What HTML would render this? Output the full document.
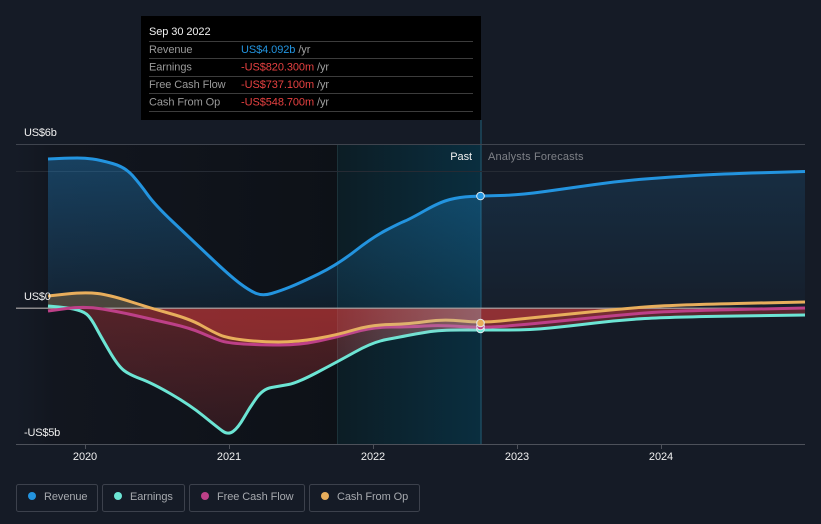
<!DOCTYPE html>
<html><head><meta charset="utf-8"><style>
html,body{margin:0;padding:0;width:821px;height:524px;overflow:hidden;background:#151b26}
svg{position:absolute;left:0;top:0}
text{font-family:"Liberation Sans",Arial,sans-serif;font-size:11px;letter-spacing:-.08px;dominant-baseline:central;transform:translateY(1px)}
.l{fill:#9a9a9a}.w{fill:#f0f0f0}.r{fill:#e64141}.y{fill:#a0a0a0}.g{fill:#a6a9ae}
</style></head><body>
<svg width="821" height="524" viewBox="0 0 821 524" xmlns="http://www.w3.org/2000/svg">
<defs>
<linearGradient id="dark" x1="0" x2="1" y1="0" y2="0"><stop offset="0" stop-color="#151b26"/><stop offset=".12" stop-color="#12161f"/><stop offset="1" stop-color="#0d1117"/></linearGradient>
<linearGradient id="past" x1="0" x2="1" y1="0" y2="0"><stop offset="0" stop-color="#0c1d25"/><stop offset="1" stop-color="#0a2e3f"/></linearGradient>
<linearGradient id="wash" x1="0" x2="1" y1="0" y2="0"><stop offset="0" stop-color="#a8c0c8" stop-opacity=".02"/><stop offset="1" stop-color="#a8c0c8" stop-opacity=".3"/></linearGradient>
<linearGradient id="blueF" gradientUnits="userSpaceOnUse" x1="0" x2="0" y1="158" y2="308"><stop offset="0" stop-color="#2394df" stop-opacity=".34"/><stop offset="1" stop-color="#2394df" stop-opacity=".1"/></linearGradient>
<linearGradient id="blueG" gradientUnits="userSpaceOnUse" x1="0" x2="0" y1="172" y2="308"><stop offset="0" stop-color="#2394df" stop-opacity=".15"/><stop offset="1" stop-color="#2394df" stop-opacity=".03"/></linearGradient>
<linearGradient id="redE" gradientUnits="userSpaceOnUse" x1="0" x2="0" y1="308" y2="435"><stop offset="0" stop-color="#e64141" stop-opacity=".32"/><stop offset="1" stop-color="#e64141" stop-opacity=".14"/></linearGradient>
<clipPath id="up"><rect x="0" y="0" width="821" height="308"/></clipPath>
<clipPath id="down"><rect x="0" y="308" width="821" height="200"/></clipPath>
<clipPath id="upL"><rect x="0" y="0" width="481" height="308"/></clipPath>
<clipPath id="upR"><rect x="481" y="0" width="340" height="308"/></clipPath>
</defs>
<rect x="16" y="144" width="321" height="300" fill="url(#dark)"/>
<rect x="337" y="144" width="144" height="300" fill="url(#past)"/>
<line x1="337.5" y1="144" x2="337.5" y2="444" stroke="#1c3239"/>
<line x1="481" y1="120" x2="481" y2="444" stroke="#1d4a5e" stroke-width="1.5"/>
<line x1="16" y1="144.5" x2="805" y2="144.5" stroke="#3f444e"/>
<line x1="16" y1="171.5" x2="805" y2="171.5" stroke="#262b34"/>
<line x1="16" y1="444.5" x2="805" y2="444.5" stroke="#4d515a"/>
<g stroke="#4d515a"><line x1="85.5" y1="444" x2="85.5" y2="449"/><line x1="229.5" y1="444" x2="229.5" y2="449"/><line x1="373.5" y1="444" x2="373.5" y2="449"/><line x1="517.5" y1="444" x2="517.5" y2="449"/><line x1="661.5" y1="444" x2="661.5" y2="449"/></g>

<!-- fills -->
<path clip-path="url(#upL)" fill="url(#blueF)" d="M48 159 L59 158.5 Q70 158 77.5 158 Q85 158 92.5 159 Q100 160 112.5 163.5 Q125 167 132.5 175.5 Q140 184 147.5 194.5 Q155 205 172.5 221.5 Q190 238 210 257 Q230 276 240 283.5 Q250 291 256.5 293.5 Q263 296 271.5 293.5 Q280 291 290 287 Q300 283 318.5 274 Q337 265 355 251 Q373 237 386.5 230 Q400 223 405 221 Q410 219 425 210.5 Q440 202 450 199.5 Q460 197 470.5 196.5 Q481 196 500.5 195.5 L500 308 L48 308Z"/>
<path clip-path="url(#upR)" fill="url(#blueG)" d="M470.5 196.5 Q481 196 500.5 195.5 Q520 195 545 191.5 Q570 188 595 184.5 Q620 181 645 179 Q670 177 695 175.5 Q720 174 762 172.8 L805 171.5 L805 308 L470 308Z"/>
<path clip-path="url(#down)" fill="url(#redE)" d="M48 306 L59 307 Q70 308 77.5 310 Q85 312 88.5 316 Q92 320 96 327.5 Q100 335 109 350.5 Q118 366 124 370.5 Q130 375 141 379 Q152 383 171 394 Q190 405 203.5 416 Q217 427 222.5 431 Q228 435 233 431.5 Q238 428 244 417.5 Q250 407 256.5 398 Q263 389 271.5 387.5 Q280 386 288.5 384.5 Q297 383 317 372.5 Q337 362 355 352 Q373 342 386.5 339.5 Q400 337 407.5 335.5 Q415 334 427.5 332 Q440 330 460.5 330 Q481 330 505.5 330 Q530 330 550 328 Q570 326 595 323 Q620 320 645 318.5 Q670 317 737 316 L805 315 L805 308 L48 308Z"/>
<path clip-path="url(#down)" fill="#e64141" fill-opacity=".22" d="M48 311 L66.5 308.5 Q85 306 102.5 309 Q120 312 137.5 316 Q155 320 172.5 324 Q190 328 201.5 333 Q213 338 220 340.5 Q227 343 243.5 344 Q260 345 280 345 Q300 345 318.5 341 Q337 337 355 332 Q373 327 391.5 327 Q410 327 425 326 Q440 325 460.5 326.5 Q481 328 500.5 326.5 Q520 325 545 322.5 Q570 320 595 317.5 Q620 315 645 313 Q670 311 737 309.5 L805 308 L48 308Z"/>
<path clip-path="url(#down)" fill="#e64141" fill-opacity=".22" d="M48 296 L66.5 294 Q85 292 97.5 293.5 Q110 295 130 301.5 Q150 308 170 313.5 Q190 319 201.5 325.5 Q213 332 220 335 Q227 338 243.5 340 Q260 342 278.5 342 Q297 342 317 338.5 Q337 335 353.5 330 Q370 325 390 324.5 Q410 324 426.5 321.5 Q443 319 462 321 Q481 323 500.5 321 Q520 319 545 316.5 Q570 314 595 311.5 Q620 309 645 307 Q670 305 737 303.5 L805 302 L805 308 L48 308Z"/>
<path clip-path="url(#up)" fill="#e8ae5c" fill-opacity=".26" d="M48 296 L66.5 294 Q85 292 97.5 293.5 Q110 295 130 301.5 Q150 308 170 313.5 L48 313Z"/>

<line x1="16" y1="308.2" x2="805" y2="308.2" stroke="#a9a5a5" stroke-opacity=".8" stroke-width="1.5"/>

<!-- lines -->
<g fill="none" stroke-width="3" stroke-linejoin="round" stroke-linecap="butt">
<path stroke="#2394df" d="M48 159 L59 158.5 Q70 158 77.5 158 Q85 158 92.5 159 Q100 160 112.5 163.5 Q125 167 132.5 175.5 Q140 184 147.5 194.5 Q155 205 172.5 221.5 Q190 238 210 257 Q230 276 240 283.5 Q250 291 256.5 293.5 Q263 296 271.5 293.5 Q280 291 290 287 Q300 283 318.5 274 Q337 265 355 251 Q373 237 386.5 230 Q400 223 405 221 Q410 219 425 210.5 Q440 202 450 199.5 Q460 197 470.5 196.5 Q481 196 500.5 195.5 Q520 195 545 191.5 Q570 188 595 184.5 Q620 181 645 179 Q670 177 695 175.5 Q720 174 762 172.8 L805 171.5"/>
<path stroke="#6ce5d4" d="M48 306 L59 307 Q70 308 77.5 310 Q85 312 88.5 316 Q92 320 96 327.5 Q100 335 109 350.5 Q118 366 124 370.5 Q130 375 141 379 Q152 383 171 394 Q190 405 203.5 416 Q217 427 222.5 431 Q228 435 233 431.5 Q238 428 244 417.5 Q250 407 256.5 398 Q263 389 271.5 387.5 Q280 386 288.5 384.5 Q297 383 317 372.5 Q337 362 355 352 Q373 342 386.5 339.5 Q400 337 407.5 335.5 Q415 334 427.5 332 Q440 330 460.5 330 Q481 330 505.5 330 Q530 330 550 328 Q570 326 595 323 Q620 320 645 318.5 Q670 317 737 316 L805 315"/>
<path stroke="#bd4088" d="M48 311 L66.5 308.5 Q85 306 102.5 309 Q120 312 137.5 316 Q155 320 172.5 324 Q190 328 201.5 333 Q213 338 220 340.5 Q227 343 243.5 344 Q260 345 280 345 Q300 345 318.5 341 Q337 337 355 332 Q373 327 391.5 327 Q410 327 425 326 Q440 325 460.5 326.5 Q481 328 500.5 326.5 Q520 325 545 322.5 Q570 320 595 317.5 Q620 315 645 313 Q670 311 737 309.5 L805 308"/>
<path stroke="#e8ae5c" d="M48 296 L66.5 294 Q85 292 97.5 293.5 Q110 295 130 301.5 Q150 308 170 313.5 Q190 319 201.5 325.5 Q213 332 220 335 Q227 338 243.5 340 Q260 342 278.5 342 Q297 342 317 338.5 Q337 335 353.5 330 Q370 325 390 324.5 Q410 324 426.5 321.5 Q443 319 462 321 Q481 323 500.5 321 Q520 319 545 316.5 Q570 314 595 311.5 Q620 309 645 307 Q670 305 737 303.5 L805 302"/>
</g>
<path d="M337 309 H481 V331 H440 L400 337 L373 342 L337 362Z" fill="url(#wash)"/>

<!-- markers -->
<g stroke="#e6eef2" stroke-width="1"><circle cx="480.5" cy="329" r="3.8" fill="#6ce5d4"/><circle cx="480.5" cy="326" r="3.8" fill="#bd4088"/><circle cx="480.5" cy="323" r="3.8" fill="#e8ae5c"/><circle cx="480.5" cy="196" r="3.8" fill="#2394df"/></g>

<!-- axis text -->
<text x="24" y="132" class="w" style="letter-spacing:-.2px">US$6b</text>
<text x="24" y="296" class="w" style="letter-spacing:-.2px">US$0</text>
<text x="24" y="432" class="w" style="letter-spacing:-.2px">-US$5b</text>
<text x="472" y="156" class="w" text-anchor="end">Past</text>
<text x="488" y="156" fill="#7e8187" style="letter-spacing:.15px">Analysts Forecasts</text>
<text x="85" y="456" class="w" text-anchor="middle">2020</text><text x="229" y="456" class="w" text-anchor="middle">2021</text><text x="373" y="456" class="w" text-anchor="middle">2022</text><text x="517" y="456" class="w" text-anchor="middle">2023</text><text x="661" y="456" class="w" text-anchor="middle">2024</text>

<!-- tooltip -->
<rect x="141" y="16" width="340" height="104" fill="#000"/>
<g stroke="#3c3c3c"><line x1="149" y1="41.5" x2="473" y2="41.5"/><line x1="149" y1="58.5" x2="473" y2="58.5"/><line x1="149" y1="76.5" x2="473" y2="76.5"/><line x1="149" y1="93.5" x2="473" y2="93.5"/><line x1="149" y1="111.5" x2="473" y2="111.5"/></g>
<text x="149" y="31" class="w">Sep 30 2022</text>
<text x="149" y="49" class="l">Revenue</text><text x="241" y="49" fill="#2394df">US$4.092b <tspan class="y">/yr</tspan></text>
<text x="149" y="66.5" class="l">Earnings</text><text x="241" y="66.5" class="r">-US$820.300m <tspan class="y">/yr</tspan></text>
<text x="149" y="84" class="l">Free Cash Flow</text><text x="241" y="84" class="r">-US$737.100m <tspan class="y">/yr</tspan></text>
<text x="149" y="101.5" class="l">Cash From Op</text><text x="241" y="101.5" class="r">-US$548.700m <tspan class="y">/yr</tspan></text>

<!-- legend -->
<g fill="none" stroke="#3c414c"><rect x="16.5" y="484.5" width="81" height="27" rx="2"/><rect x="102.5" y="484.5" width="82" height="27" rx="2"/><rect x="189.5" y="484.5" width="115" height="27" rx="2"/><rect x="309.5" y="484.5" width="110" height="27" rx="2"/></g>
<circle cx="32" cy="496" r="4" fill="#2394df"/><circle cx="118" cy="496" r="4" fill="#6ce5d4"/><circle cx="205" cy="496" r="4" fill="#bd4088"/><circle cx="325" cy="496" r="4" fill="#e8ae5c"/>
<text x="44" y="496" class="g">Revenue</text><text x="130" y="496" class="g">Earnings</text><text x="217" y="496" class="g">Free Cash Flow</text><text x="337" y="496" class="g">Cash From Op</text>
</svg>
</body></html>
